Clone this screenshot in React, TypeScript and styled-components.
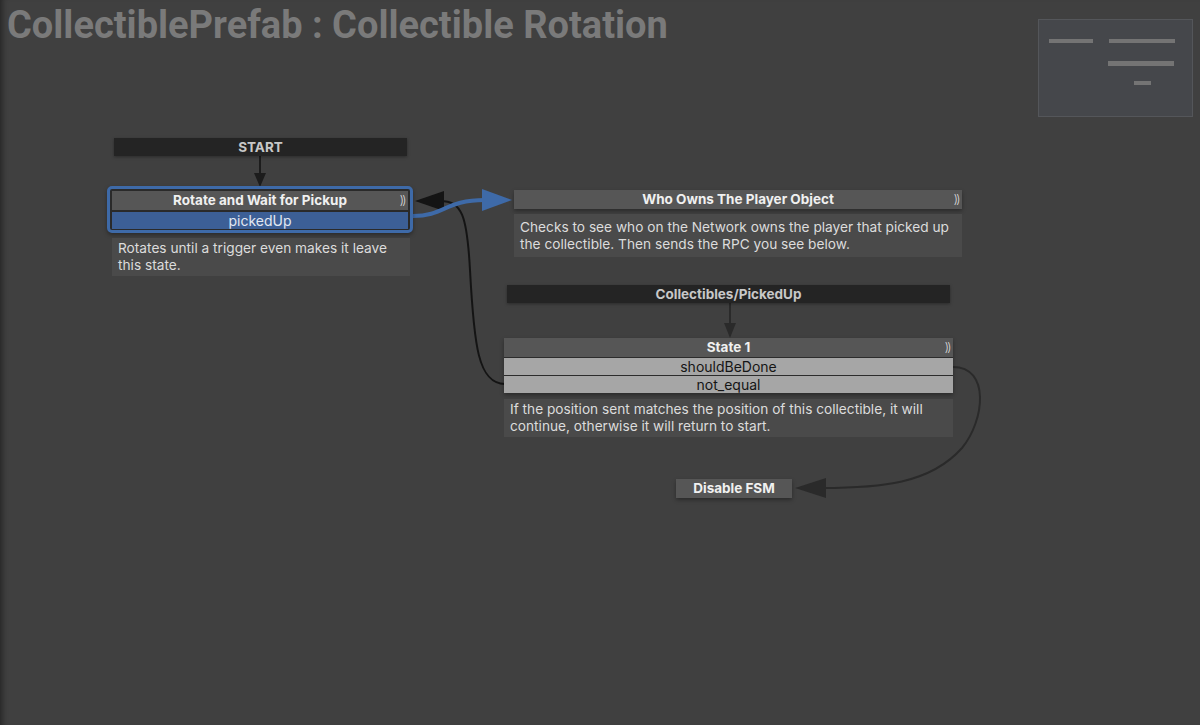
import React from "react"
import styled, { createGlobalStyle } from "styled-components"

const GlobalStyle = createGlobalStyle`
  html, body {
    margin: 0;
    padding: 0;
    background: #404040;
  }
`

type Pos = { $x: number, $y: number, $w: number }

export default function App(): JSX.Element {
  return (
    <Canvas>
      <GlobalStyle />
      <Title>CollectiblePrefab : Collectible Rotation</Title>

      <Edges width={1200} height={725}>
        {/* start -> rotate */}
        <line x1={260} y1={156} x2={260} y2={176} stroke="#1c1c1c" strokeWidth={2} />
        <polygon points="254,173 266,173 260,187" fill="#1c1c1c" />
        {/* return to rotate (not_equal) */}
        <path
          d="M 505 384 C 478 384, 474 345, 470 270 C 467 215, 462 201, 440 201"
          fill="none"
          stroke="#141414"
          strokeWidth={2}
        />
        <polygon points="415,201 444,191 444,211" fill="#141414" />
        {/* pickedUp -> who owns */}
        <path
          d="M 413 216 C 445 216, 445 200, 485 200"
          fill="none"
          stroke="#3e6aa8"
          strokeWidth={4}
        />
        <polygon points="482,189 482,211 512,200" fill="#3e6aa8" />
        {/* global event -> state 1 */}
        <line x1={730} y1={303} x2={730} y2={326} stroke="#2a2a2a" strokeWidth={2} />
        <polygon points="724,323 736,323 730,338" fill="#2a2a2a" />
        {/* shouldBeDone -> disable */}
        <path
          d="M 953 367 C 990 367, 985 420, 962 448 C 930 484, 880 488, 822 488"
          fill="none"
          stroke="#2a2a2a"
          strokeWidth={2}
        />
        <polygon points="795,488 826,478 826,498" fill="#2a2a2a" />
      </Edges>

      <EventBar $x={114} $y={138} $w={293}>START</EventBar>

      <Group $x={107} $y={186} $w={306} $gap={5}>
        <Selected>
          <Header>
            Rotate and Wait for Pickup
            <Ends>))</Ends>
          </Header>
          <Transition $active>pickedUp</Transition>
        </Selected>
        <Comment $inset={5}>
          Rotates until a trigger even makes it leave this state.
        </Comment>
      </Group>

      <Group $x={514} $y={190} $w={448} $gap={5}>
        <Node>
          <Header>
            Who Owns The Player Object
            <Ends>))</Ends>
          </Header>
        </Node>
        <Comment $roomy>
          Checks to see who on the Network owns the player that picked up the
          collectible. Then sends the RPC you see below.
        </Comment>
      </Group>

      <EventBar $x={507} $y={285} $w={443}>Collectibles/PickedUp</EventBar>

      <Group $x={504} $y={338} $w={449} $gap={6}>
        <Node>
          <Header>
            State 1
            <Ends>))</Ends>
          </Header>
          <Transition>shouldBeDone</Transition>
          <Transition>not_equal</Transition>
        </Node>
        <Comment>
          If the position sent matches the position of this collectible, it
          will continue, otherwise it will return to start.
        </Comment>
      </Group>

      <Group $x={676} $y={479} $w={116} $gap={0}>
        <Node>
          <Header>Disable FSM</Header>
        </Node>
      </Group>

      <Minimap>
        <MiniBar $x={10} $y={19} $w={44} />
        <MiniBar $x={70} $y={19} $w={66} />
        <MiniBar $x={69} $y={41} $w={66} $h={5} />
        <MiniBar $x={95} $y={61} $w={17} />
      </Minimap>
    </Canvas>
  )
}

const Canvas = styled.div`
  position: relative;
  width: 1200px;
  height: 725px;
  overflow: hidden;
  background: #404040;
  box-shadow: inset 7px 0 6px -5px rgba(0, 0, 0, 0.45);
  font-family: Inter, "Noto Sans", sans-serif;
`

const Title = styled.h1`
  margin: 0;
  padding: 1px 0 0 7px;
  font-family: Roboto, "Liberation Sans", sans-serif;
  font-size: 38px;
  font-weight: 700;
  color: #7a7a7a;
  line-height: 48px;
`

const Edges = styled.svg`
  position: absolute;
  left: 0;
  top: 0;
  pointer-events: none;
`

const Placed = styled.div<Pos>`
  position: absolute;
  left: ${(p) => p.$x}px;
  top: ${(p) => p.$y}px;
  width: ${(p) => p.$w}px;
  box-sizing: border-box;
`

const Group = styled(Placed)<{ $gap: number }>`
  display: flex;
  flex-direction: column;
  gap: ${(p) => p.$gap}px;
`

const EventBar = styled(Placed)`
  height: 18px;
  background: #242424;
  color: #c8c8c8;
  font-size: 13.5px;
  font-weight: 700;
  line-height: 18px;
  text-align: center;
  box-shadow: 0 1px 3px rgba(0, 0, 0, 0.35);
`

const Node = styled.div`
  display: flex;
  flex-direction: column;
  gap: 1px;
  background: #2c2c2c;
  box-shadow: 0 2px 4px rgba(0, 0, 0, 0.35);
`

const Selected = styled(Node)`
  background: #2a2a2a;
  border: 3px solid #3e6aa8;
  border-radius: 5px;
  padding: 2px 2px 1px;
  gap: 2px;
`

const Header = styled.div`
  position: relative;
  height: 18.5px;
  background: #565656;
  color: #f0f0f0;
  font-size: 13.5px;
  font-weight: 700;
  line-height: 18.5px;
  text-align: center;
`

const Ends = styled.span`
  position: absolute;
  right: 3px;
  top: 0;
  font-weight: 300;
  font-size: 12px;
  letter-spacing: -1.5px;
  color: #dcdcdc;
`

const Transition = styled.div<{ $active?: boolean }>`
  height: 17px;
  background: ${(p) => (p.$active ? "#3c5f96" : "#a6a6a6")};
  color: ${(p) => (p.$active ? "#e2e8f2" : "#151515")};
  font-size: 14px;
  line-height: 17px;
  text-align: center;
`

const Comment = styled.div<{ $inset?: number, $roomy?: boolean }>`
  margin-left: ${(p) => p.$inset ?? 0}px;
  margin-right: ${(p) => (p.$inset ? p.$inset - 2 : 0)}px;
  padding: ${(p) => (p.$roomy ? "5px 5px 4px 6px" : "2px 5px 2px 6px")};
  background: #4a4a4a;
  color: #dcdcdc;
  font-size: 13.7px;
  line-height: 17px;
`

const Minimap = styled.div`
  position: absolute;
  left: 1038px;
  top: 19px;
  width: 155px;
  height: 98px;
  box-sizing: border-box;
  background: #45474b;
  border: 1px solid #54565a;
`

const MiniBar = styled.div<{ $x: number, $y: number, $w: number, $h?: number }>`
  position: absolute;
  left: ${(p) => p.$x}px;
  top: ${(p) => p.$y}px;
  width: ${(p) => p.$w}px;
  height: ${(p) => p.$h ?? 4}px;
  background: #747474;
`
